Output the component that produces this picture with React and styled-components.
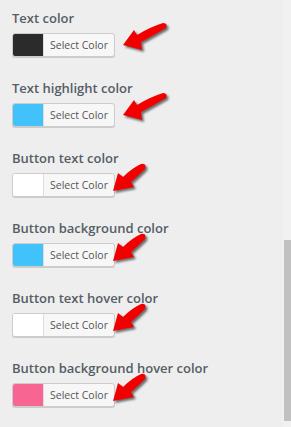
import React from "react";
import styled, { createGlobalStyle } from "styled-components";

const GlobalStyle = createGlobalStyle`
  html, body {
    margin: 0;
    padding: 0;
    background: #eeeeee;
  }
  body {
    font-family: "Open Sans", "Liberation Sans", sans-serif;
  }
`;

const Page = styled.div`
  display: flex;
  width: 291px;
  height: 427px;
  overflow: hidden;
  background: #eeeeee;
`;

const Content = styled.div`
  flex: 1;
  display: flex;
  flex-direction: column;
  gap: 22px;
  padding: 9px 0 0 12px;
`;

const Field = styled.div`
  position: relative;
  display: flex;
  flex-direction: column;
  gap: 6px;
`;

const Label = styled.div`
  font-size: 13px;
  font-weight: 600;
  line-height: 18px;
  color: #555d66;
`;

const Picker = styled.button`
  display: flex;
  align-items: stretch;
  width: 103px;
  height: 24px;
  padding: 0;
  border: 1px solid #cccccc;
  border-radius: 3px;
  background: #f7f7f7;
  box-shadow: 0 1px 0 #cccccc;
  overflow: hidden;
  cursor: pointer;
  font-family: inherit;
`;

const Swatch = styled.span`
  width: 30px;
  flex: none;
  background: ${(p) => p.$color};
  border-right: 1px solid #dddddd;
`;

const PickerText = styled.span`
  flex: 1;
  display: flex;
  align-items: center;
  justify-content: center;
  font-size: 10.5px;
  color: #555555;
`;

const Arrow = styled.svg`
  position: absolute;
  left: ${(p) => p.$left}px;
  top: ${(p) => p.$top}px;
  overflow: visible;
  filter: drop-shadow(2px 2px 1px rgba(0, 0, 0, 0.55));
`;

const Track = styled.div`
  width: 9px;
  flex: none;
  background: #f1f1f1;
  padding: 240px 0 6px 2px;
  box-sizing: border-box;
  display: flex;
`;

const Thumb = styled.div`
  flex: 1;
  background: #c1c1c1;
`;

const LongArrow = () => (
  <Arrow width="50" height="32" viewBox="0 0 50 32" $left={106} $top={12}>
    <path
      d="M5,24 L16,9 L19,14 Q32,6 45,2 Q50,2 48,7 Q36,14 23,21 L24,29 Z"
      fill="#f20000"
    />
  </Arrow>
);

const ShortArrow = () => (
  <Arrow width="40" height="36" viewBox="0 0 40 36" $left={98} $top={-13 + 24}>
    <path
      d="M3,31 L8,13 L13,17 Q22,8 31,4 Q37,3 35,9 Q28,16 21,22 L24,27 Z"
      fill="#f20000"
    />
  </Arrow>
);

const fields = [
  { label: "Text color", color: "#2b2b2b", arrow: "long" },
  { label: "Text highlight color", color: "#42c2fb", arrow: "long" },
  { label: "Button text color", color: "#ffffff", arrow: "short" },
  { label: "Button background color", color: "#42c2fb", arrow: "short" },
  { label: "Button text hover color", color: "#ffffff", arrow: "short" },
  { label: "Button background hover color", color: "#f76692", arrow: "short" },
];

export default function App() {
  return (
    <>
      <GlobalStyle />
      <Page>
        <Content>
          {fields.map((f) => (
            <Field key={f.label}>
              <Label>{f.label}</Label>
              <Picker type="button">
                <Swatch $color={f.color} />
                <PickerText>Select Color</PickerText>
              </Picker>
              {f.arrow === "long" ? <LongArrow /> : <ShortArrow />}
            </Field>
          ))}
        </Content>
        <Track>
          <Thumb />
        </Track>
      </Page>
    </>
  );
}
